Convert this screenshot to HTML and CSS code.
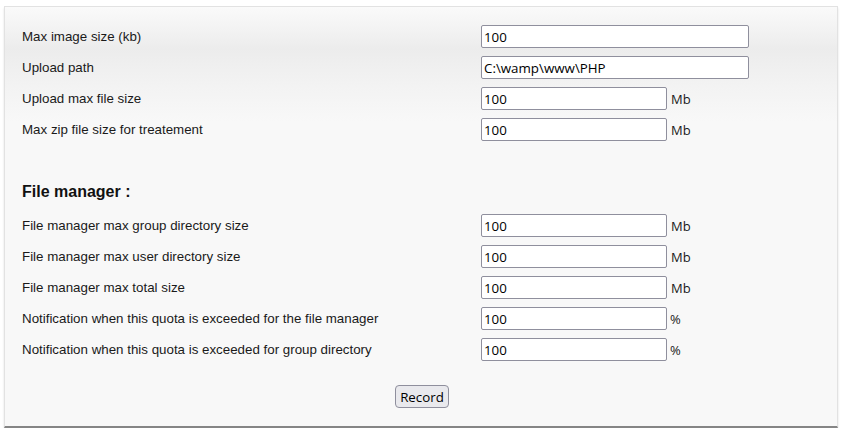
FILE: index.html
```html
<!DOCTYPE html>
<html>
<head>
<meta charset="utf-8">
<link rel="stylesheet" href="styles.css">
</head>
<body>
<div class="panel">
  <form class="form">
    <div class="row"><label class="lbl">Max image size (kb)</label><div class="field"><input class="inp wide" type="text" value="100"></div></div>
    <div class="row"><label class="lbl">Upload path</label><div class="field"><input class="inp wide" type="text" value="C:\wamp\www\PHP"></div></div>
    <div class="row"><label class="lbl">Upload max file size</label><div class="field"><input class="inp" type="text" value="100"><span class="unit">Mb</span></div></div>
    <div class="row"><label class="lbl">Max zip file size for treatement</label><div class="field"><input class="inp" type="text" value="100"><span class="unit">Mb</span></div></div>

    <h3 class="section">File manager :</h3>

    <div class="row"><label class="lbl">File manager max group directory size</label><div class="field"><input class="inp" type="text" value="100"><span class="unit">Mb</span></div></div>
    <div class="row"><label class="lbl">File manager max user directory size</label><div class="field"><input class="inp" type="text" value="100"><span class="unit">Mb</span></div></div>
    <div class="row"><label class="lbl">File manager max total size</label><div class="field"><input class="inp" type="text" value="100"><span class="unit">Mb</span></div></div>
    <div class="row"><label class="lbl">Notification when this quota is exceeded for the file manager</label><div class="field"><input class="inp" type="text" value="100"><span class="unit pct">%</span></div></div>
    <div class="row"><label class="lbl">Notification when this quota is exceeded for group directory</label><div class="field"><input class="inp" type="text" value="100"><span class="unit pct">%</span></div></div>

    <div class="actions"><button class="btn" type="button">Record</button></div>
  </form>
</div>
</body>
</html>
```

FILE: styles.css
```css
html, body {
  margin: 0;
  padding: 0;
  background: #ffffff;
}

body {
  font-family: "Liberation Sans", Arial, sans-serif;
  font-size: 13.33px;
  color: #1a1a1a;
}

.panel {
  box-sizing: border-box;
  width: 834px;
  margin: 6px 0 0 4px;
  border: 1px solid #e2e2e2;
  border-bottom: 2px solid #858585;
  background: linear-gradient(#fafafa 0px, #ececec 42px, #f3f3f3 80px, #f8f8f8 115px, #f8f8f8 100%);
  box-shadow: 0 2px 2px rgba(0, 0, 0, 0.12);
  padding: 14px 17px 18px 17px;
}

.form {
  display: flex;
  flex-direction: column;
}

.row {
  display: grid;
  grid-template-columns: 459px 1fr;
  align-items: center;
  height: 31px;
}

.lbl {
  line-height: 16px;
}

.field {
  display: flex;
  align-items: center;
}

.inp {
  box-sizing: border-box;
  width: 186px;
  height: 23px;
  margin: 0;
  padding: 0 2px;
  border: 1px solid #8f8f9d;
  border-radius: 2px;
  background: #ffffff;
  font-family: "Open Sans", "Noto Sans", sans-serif;
  font-size: 13.33px;
  color: #000000;
}

.inp.wide {
  width: 268px;
}

.unit {
  margin-left: 4px;
  font-family: "Open Sans", "Noto Sans", sans-serif;
  font-size: 13px;
  color: #1a1a1a;
}

.unit.pct {
  margin-left: 3px;
}

.section {
  margin: 0;
  padding-top: 37px;
  padding-bottom: 9px;
  font-size: 16px;
  line-height: 19px;
  font-weight: bold;
  color: #111111;
}

.actions {
  display: flex;
  justify-content: center;
  margin-top: 20px;
  padding-left: 2px;
}

.btn {
  box-sizing: border-box;
  height: 23px;
  padding: 0 4px;
  border: 1px solid #8f8f9d;
  border-radius: 4px;
  background: #e9e9ed;
  font-family: "Open Sans", "Noto Sans", sans-serif;
  font-size: 13.33px;
  color: #000000;
}
```
